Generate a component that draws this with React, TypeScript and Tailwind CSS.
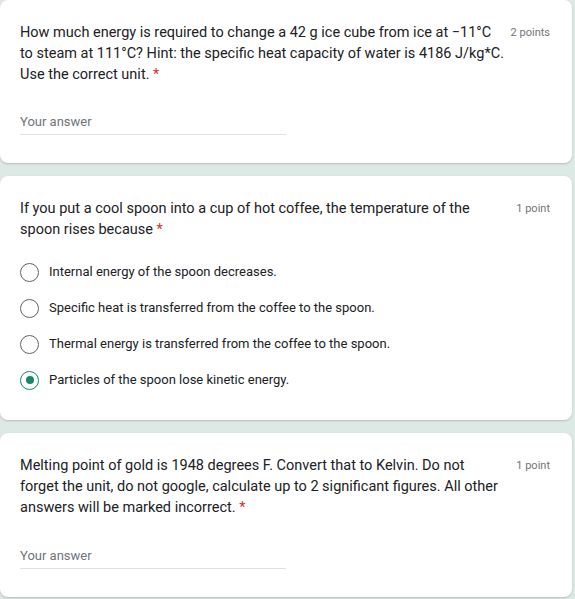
import React from 'react';

interface Option {
  label: string;
  checked?: boolean;
}

const options: Option[] = [
  { label: 'Internal energy of the spoon decreases.' },
  { label: 'Specific heat is transferred from the coffee to the spoon.' },
  { label: 'Thermal energy is transferred from the coffee to the spoon.' },
  { label: 'Particles of the spoon lose kinetic energy.', checked: true },
];

function Card({ children }: { children: React.ReactNode }) {
  return (
    <div className="w-[572px] rounded-lg bg-white px-5 pt-[22px] shadow-[0_1px_2px_rgba(60,64,67,0.25)]">
      {children}
    </div>
  );
}

// lines are kept as in the form so the wrapping matches
function Question({ lines, points }: { lines: string[]; points: string }) {
  return (
    <div className="flex items-start justify-between gap-[6px] pr-[2px]">
      <div className="whitespace-nowrap text-[14.5px] leading-[21px] text-[#202124]">
        {lines.map((line, i) => (
          <div key={i}>
            {line}
            {i === lines.length - 1 && <span className="text-[#d93025]"> *</span>}
          </div>
        ))}
      </div>
      <div className="pt-[3px] text-[11px] leading-[16px] text-[#70757a]">{points}</div>
    </div>
  );
}

function AnswerField() {
  return (
    <div className="w-[266px] border-b border-[#e0e0e0] pb-1 text-[13px] leading-4 text-[#70757a]">
      Your answer
    </div>
  );
}

function Radio({ checked }: { checked?: boolean }) {
  return (
    <span
      className={`flex h-[19px] w-[19px] shrink-0 items-center justify-center rounded-full border-[1.5px] ${
        checked ? 'border-[#17876a]' : 'border-[#5f6368]'
      }`}
    >
      {checked && <span className="h-2 w-2 rounded-full bg-[#17876a]"></span>}
    </span>
  );
}

export default function App() {
  return (
    <div
      className="flex min-h-[599px] w-[575px] flex-col gap-[13px] bg-[#dde9e5]"
      style={{ fontFamily: 'Roboto, "Liberation Sans", sans-serif' }}
    >
      <Card>
        <Question
          points="2 points"
          lines={[
            'How much energy is required to change a 42 g ice cube from ice at −11°C',
            'to steam at 111°C? Hint: the specific heat capacity of water is 4186 J/kg*C.',
            'Use the correct unit.',
          ]}
        />
        <div className="mt-[29px] pb-[28px]">
          <AnswerField />
        </div>
      </Card>

      <Card>
        <Question
          points="1 point"
          lines={[
            'If you put a cool spoon into a cup of hot coffee, the temperature of the',
            'spoon rises because',
          ]}
        />
        <div className="mt-[14px] flex flex-col pb-[22px]">
          {options.map((o) => (
            <label key={o.label} className="flex h-9 items-center gap-[10px]">
              <Radio checked={o.checked} />
              <span className="text-[13px] text-[#202124]">{o.label}</span>
            </label>
          ))}
        </div>
      </Card>

      <Card>
        <Question
          points="1 point"
          lines={[
            'Melting point of gold is 1948 degrees F. Convert that to Kelvin. Do not',
            'forget the unit, do not google, calculate up to 2 significant figures. All other',
            'answers will be marked incorrect.',
          ]}
        />
        <div className="mt-[30px] pb-[28px]">
          <AnswerField />
        </div>
      </Card>
    </div>
  );
}
